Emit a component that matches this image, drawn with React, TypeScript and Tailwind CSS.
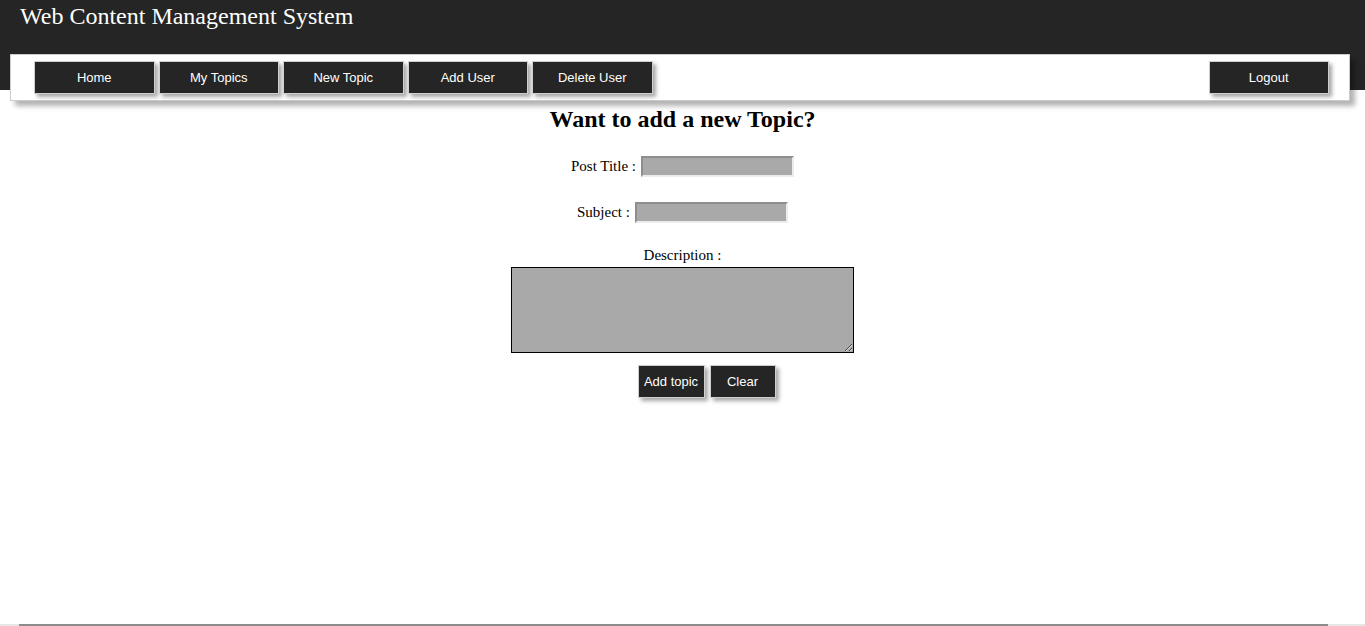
import React from "react";

const navItems = ["Home", "My Topics", "New Topic", "Add User", "Delete User"];

const NavButton: React.FC<{ label: string }> = ({ label }) => (
  <button className="w-[120.5px] h-[33px] bg-[#252525] border border-[#cfcfcf] text-white text-[13px] shadow-[3px_3px_4px_rgba(0,0,0,0.35)] font-['Liberation_Sans',Arial,sans-serif]">
    {label}
  </button>
);

const App: React.FC = () => {
  return (
    <div className="min-h-[626px] flex flex-col bg-white font-['Liberation_Serif','Times_New_Roman',serif] text-black">
      <div className="h-[90px] bg-[#252525]">
        <div className="pl-[20px] pt-[2px] text-white text-[24px] leading-[28px]">
          Web Content Management System
        </div>
      </div>

      <div className="-mt-[36px] ml-[10px] mr-[15px] h-[47px] bg-white border border-[#cccccc] shadow-[5px_5px_5px_rgba(0,0,0,0.3)] flex items-start pt-[6px] pl-[23px] pr-[20px]">
        <div className="flex gap-[4px]">
          {navItems.map((item) => (
            <NavButton key={item} label={item} />
          ))}
        </div>
        <div className="ml-auto">
          <NavButton label="Logout" />
        </div>
      </div>

      <div className="flex flex-col items-center">
        <h2 className="mt-[4px] text-[24px] leading-[28px] font-bold">Want to add a new Topic?</h2>

        <div className="mt-[23px] flex items-center text-[15px] h-[21px]">
          <span>Post Title :</span>
          <input className="ml-[5px] w-[153px] h-[21px] bg-[#a9a9a9] border-2 border-t-[#8e8e8e] border-l-[#8e8e8e] border-b-[#ececec] border-r-[#ececec]" />
        </div>

        <div className="mt-[25px] flex items-center text-[15px] h-[21px]">
          <span>Subject :</span>
          <input className="ml-[5px] w-[153px] h-[21px] bg-[#a9a9a9] border-2 border-t-[#8e8e8e] border-l-[#8e8e8e] border-b-[#ececec] border-r-[#ececec]" />
        </div>

        <div className="mt-[23px] text-[15px] leading-[18px]">Description :</div>
        <textarea className="mt-[3px] w-[343px] h-[86px] bg-[#a9a9a9] border border-black" />

        <div className="mt-[12px] ml-[48px] flex gap-[5px] font-['Liberation_Sans',Arial,sans-serif] text-[13px] text-white">
          <button className="w-[67px] h-[33px] bg-[#252525] border border-[#cfcfcf] shadow-[3px_3px_4px_rgba(0,0,0,0.35)]">
            Add topic
          </button>
          <button className="w-[66px] h-[33px] bg-[#252525] border border-[#cfcfcf] shadow-[3px_3px_4px_rgba(0,0,0,0.35)]">
            Clear
          </button>
        </div>
      </div>

      <div className="flex-1" />
      <div className="h-[2px] bg-[#e6e6e6] pl-[19px] pr-[37px]">
        <div className="h-full bg-[#8c8c8c]" />
      </div>
    </div>
  );
};

export default App;
